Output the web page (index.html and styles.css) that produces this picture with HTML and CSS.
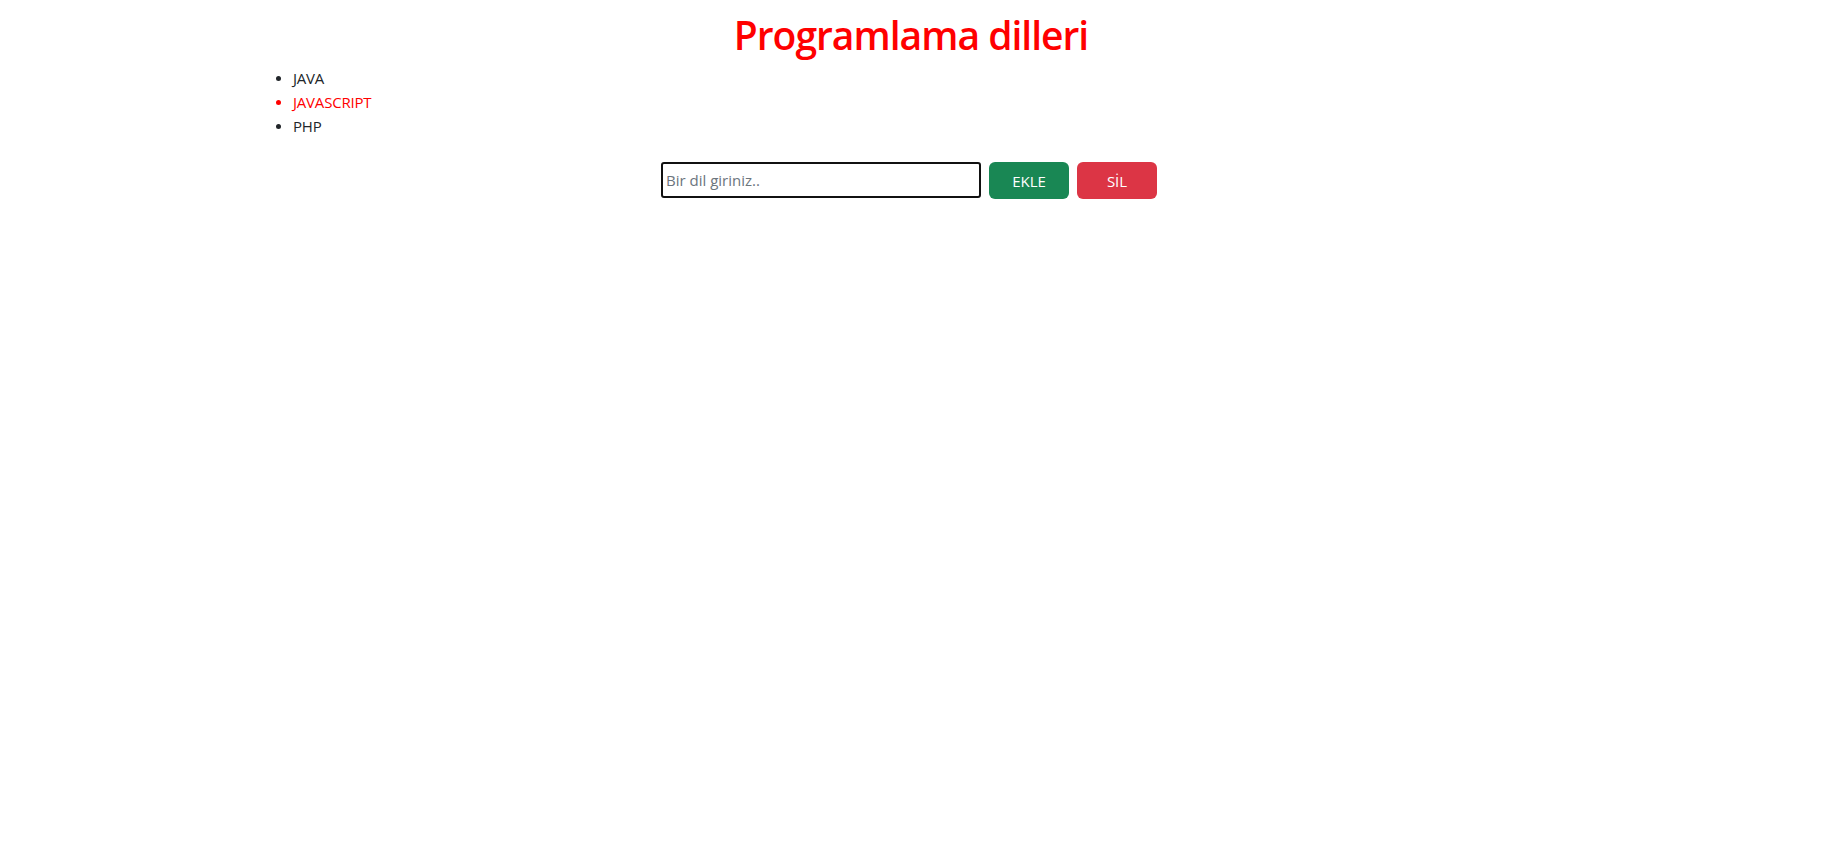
FILE: index.html
```html
<!DOCTYPE html>
<html lang="tr">
<head>
<meta charset="utf-8">
<title>Programlama dilleri</title>
<link rel="stylesheet" href="styles.css">
</head>
<body>
<div class="container">
  <h1 class="title">Programlama dilleri</h1>
  <ul class="langs">
    <li>JAVA</li>
    <li class="active">JAVASCRIPT</li>
    <li>PHP</li>
  </ul>
  <div class="form-row">
    <input class="lang-input" type="text" placeholder="Bir dil giriniz..">
    <button class="btn btn-add" type="button">EKLE</button>
    <button class="btn btn-del" type="button">SİL</button>
  </div>
</div>
</body>
</html>
```

FILE: styles.css
```css
* { box-sizing: border-box; }

body {
  margin: 0;
  font-family: "Open Sans", "Noto Sans", sans-serif;
  font-size: 16px;
  line-height: 24px;
  color: #212529;
  background: #fff;
}

.container {
  max-width: 1320px;
  margin: 0 auto;
  padding: 0 12px;
}

.title {
  margin: 11px 0 7px;
  text-align: center;
  color: #ff0000;
  font-size: 39px;
  font-weight: 600;
  line-height: 48px;
  letter-spacing: -1px;
}

.langs {
  margin: 0;
  padding-left: 30px;
  font-size: 15px;
  font-weight: 400;
  letter-spacing: -0.2px;
}

.langs li { line-height: 24px; }

.langs li::marker { font-size: 14px; }

.langs .active { color: #ff0000; }

.form-row {
  display: flex;
  justify-content: center;
  gap: 8px;
  margin-top: 24px;
  padding-right: 4px;
}

.lang-input {
  width: 320px;
  height: 36px;
  border: 2px solid #111;
  border-radius: 3px;
  padding: 0 3px;
  font-family: inherit;
  font-size: 15px;
  color: #212529;
  outline: none;
}

.lang-input::placeholder { color: #6c757d; }

.btn {
  width: 80px;
  height: 37px;
  border: none;
  border-radius: 6px;
  color: #fff;
  font-family: inherit;
  font-size: 15px;
  cursor: pointer;
}

.btn-add { background: #198754; }
.btn-del { background: #dc3545; }
```
